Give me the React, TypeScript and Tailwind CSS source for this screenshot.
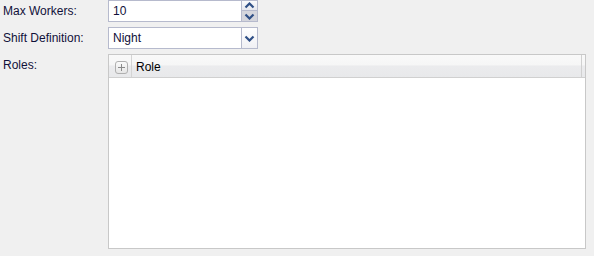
import React from "react";

const font = { fontFamily: '"Liberation Sans", Arial, sans-serif' };

function Up() {
  return (
    <svg width="11" height="7" viewBox="0 0 11 7">
      <path d="M1.5 5.5 L5.5 1.5 L9.5 5.5" fill="none" stroke="#2f4f86" strokeWidth="2.2" />
    </svg>
  );
}
function Down() {
  return (
    <svg width="11" height="7" viewBox="0 0 11 7">
      <path d="M1.5 1.5 L5.5 5.5 L9.5 1.5" fill="none" stroke="#2f4f86" strokeWidth="2.2" />
    </svg>
  );
}

export default function App() {
  return (
    <div
      className="w-[594px] h-[256px] bg-[#f0f0f0] text-[12px] text-[#10103a] overflow-hidden"
      style={font}
    >
      <div className="flex h-[22px]">
        <div className="w-[108px] pl-[3px] leading-[22px]">Max Workers:</div>
        <div className="flex w-[150px] h-[22px] border border-[#b6bacd] bg-white">
          <div className="flex-1 pl-[4px] leading-[20px] text-[12px]">10</div>
          <div className="flex flex-col w-[16px] border-l border-[#b6bacd]">
            <div className="h-[10px] flex items-center justify-center bg-gradient-to-b from-[#fbfbfd] to-[#e6e7ee] border-b border-[#b6bacd]">
              <Up />
            </div>
            <div className="flex-1 flex items-center justify-center bg-[#d5d6dd]">
              <Down />
            </div>
          </div>
        </div>
      </div>
      <div className="flex h-[22px] mt-[5px]">
        <div className="w-[108px] pl-[3px] leading-[22px]">Shift Definition:</div>
        <div className="flex w-[150px] h-[22px] border border-[#b6bacd] bg-white">
          <div className="flex-1 pl-[4px] leading-[20px] text-[12px]">Night</div>
          <div className="w-[16px] border-l border-[#b6bacd] flex items-center justify-center bg-gradient-to-b from-[#ffffff] to-[#f0f0f4]">
            <Down />
          </div>
        </div>
      </div>
      <div className="flex mt-[5px]">
        <div className="w-[108px] pl-[3px] leading-[22px]">Roles:</div>
        <div className="w-[478px] h-[195px] border border-[#c8c8c8] bg-white flex flex-col">
          <div className="flex h-[23px] border-b border-[#d0d0d0] bg-[linear-gradient(to_bottom,#f9f9f9_0%,#f6f6f6_45%,#ebebed_50%,#e8e9eb_100%)]">
            <div className="w-[23px] border-r border-[#d4d4d4] flex items-center justify-center pl-[3px]">
              <div className="w-[13px] h-[13px] mt-[2px] rounded-[3px] border border-[#b0b0b0] bg-gradient-to-b from-[#fafafa] to-[#e6e6e6] flex items-center justify-center">
                <svg width="7" height="7" viewBox="0 0 7 7">
                  <path d="M3.5 0 V7 M0 3.5 H7" stroke="#8a8a8a" strokeWidth="1" />
                </svg>
              </div>
            </div>
            <div className="flex-1 pl-[4px] flex items-center pt-[2px] text-[12px] text-black border-r border-[#d0d0d0]">
              Role
            </div>
            <div className="w-[3px]" />
          </div>
          <div className="flex-1" />
        </div>
      </div>
    </div>
  );
}
